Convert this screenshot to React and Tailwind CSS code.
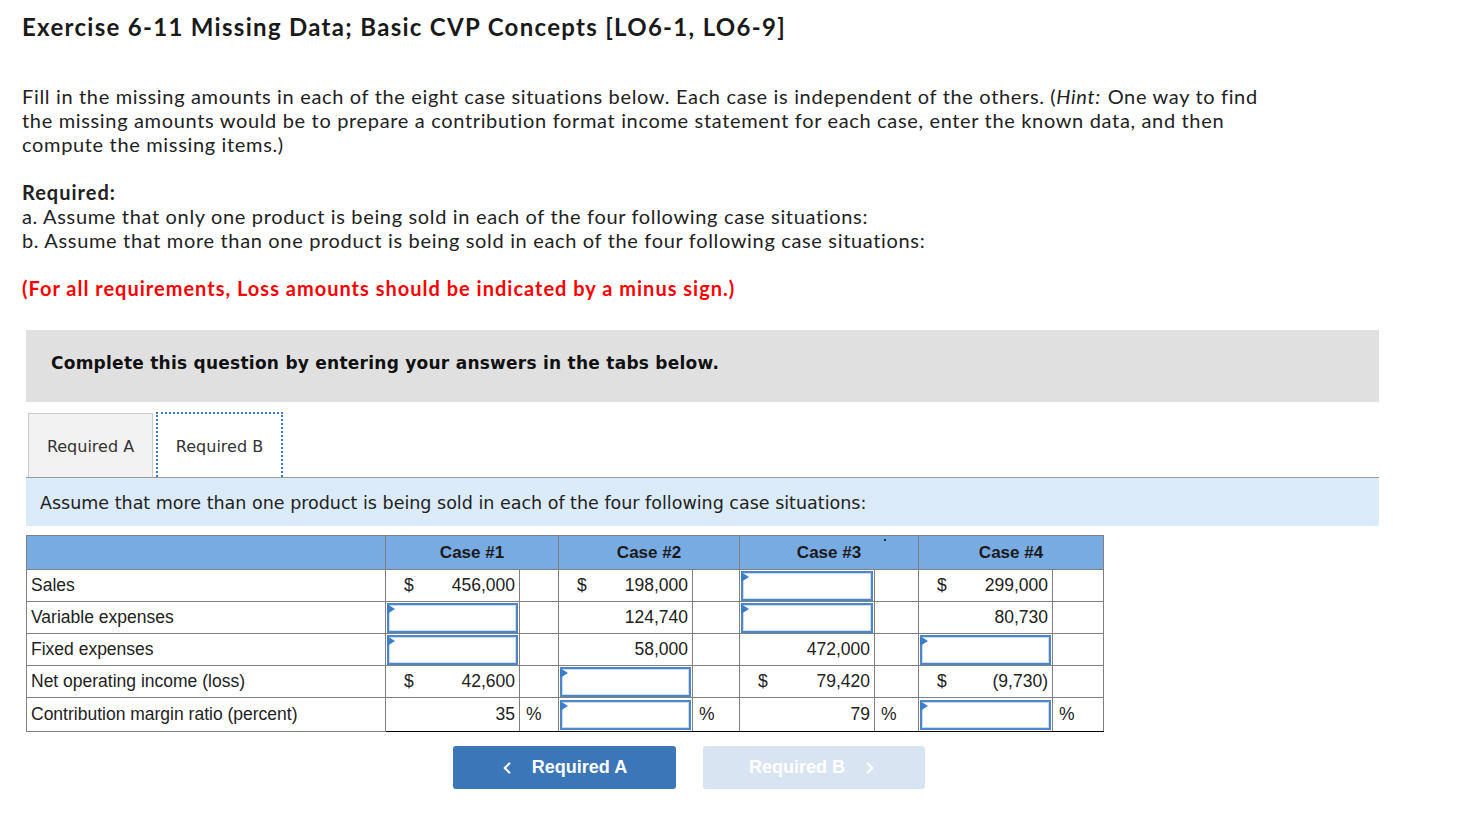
import React from 'react';
import { ChevronLeft, ChevronRight } from 'lucide-react';

const body = { fontFamily: 'Lato, "Open Sans", sans-serif' };

const InputBox = () => (
  <div className="relative h-[30px] mx-px border-2 border-[#4d87c7] bg-white shadow-[inset_0_0_0_1px_#c9dcf0]">
    <span className="absolute -left-[2px] -top-[1px] w-0 h-0 border-y-[5px] border-y-transparent border-l-[8px] border-l-[#3d7cc9]" />
  </div>
);

const Money = ({ dollar, value }) => (
  <div className="flex items-center justify-between pl-[18px] pr-[4px]">
    <span>{dollar ? '$' : ''}</span>
    <span>{value}</span>
  </div>
);

const rows = [
  {
    label: 'Sales',
    cells: [
      { dollar: true, value: '456,000' },
      { dollar: true, value: '198,000' },
      { input: true },
      { dollar: true, value: '299,000' },
    ],
  },
  {
    label: 'Variable expenses',
    cells: [{ input: true }, { value: '124,740' }, { input: true }, { value: '80,730' }],
  },
  {
    label: 'Fixed expenses',
    cells: [{ input: true }, { value: '58,000' }, { value: '472,000' }, { input: true }],
  },
  {
    label: 'Net operating income (loss)',
    cells: [
      { dollar: true, value: '42,600' },
      { input: true },
      { dollar: true, value: '79,420' },
      { dollar: true, value: '(9,730)' },
    ],
    topLine: true,
  },
  {
    label: 'Contribution margin ratio (percent)',
    cells: [
      { value: '35', pct: true },
      { input: true, pct: true },
      { value: '79', pct: true },
      { input: true, pct: true },
    ],
    topLine: true,
    last: true,
  },
];

const widths = ['w-[359px]', 'w-[134px]', 'w-[39px]', 'w-[134px]', 'w-[47px]', 'w-[135px]', 'w-[44px]', 'w-[134px]', 'w-[51px]'];

export default function App() {
  return (
    <div className="min-h-screen bg-white text-[#222] pl-[22px] pt-[11px]" style={body}>
      <h1 className="text-[24px] leading-[32px] font-bold tracking-[1.3px] text-[#1a1a1a]">
        Exercise 6-11 Missing Data; Basic CVP Concepts [LO6-1, LO6-9]
      </h1>

      <div className="text-[20px] leading-[24px] tracking-[0.66px] mt-[41px] w-[1250px]">
        <p>
          Fill in the missing amounts in each of the eight case situations below. Each case is independent of the
          others. (<i className="pr-[1px]">Hint:</i> One way to find the missing amounts would be to prepare a
          contribution format income statement for each case, enter the known data, and then compute the missing
          items.)
        </p>
        <p className="mt-[24px] font-bold tracking-[1px]">Required:</p>
        <p>a. Assume that only one product is being sold in each of the four following case situations:</p>
        <p>b. Assume that more than one product is being sold in each of the four following case situations:</p>
        <p className="mt-[24px] font-bold tracking-[1px] text-[#ff0000]">
          (For all requirements, Loss amounts should be indicated by a minus sign.)
        </p>
      </div>

      <div className="ml-[4px] w-[1353px] mt-[30px]" style={{ fontFamily: '"DejaVu Sans", Verdana, sans-serif' }}>
        <div className="h-[72px] bg-[#e0e0e0] flex items-center pl-[25px] pb-[4px] text-[17px] tracking-[0.25px] font-bold text-[#111]">
          Complete this question by entering your answers in the tabs below.
        </div>

        <div className="flex items-end gap-[3px] mt-[10px] pl-[2px] border-b border-[#999]">
          <div className="w-[125px] h-[64px] bg-[#f2f2f2] border border-b-0 border-[#ccc] flex items-center justify-center pt-[2px] text-[16px] text-[#333]">
            Required A
          </div>
          <div className="w-[127px] h-[65px] bg-white border-2 border-dotted border-[#3b78c2] border-b-0 flex items-center justify-center pt-[2px] text-[16px] text-[#333]">
            Required B
          </div>
        </div>

        <div className="h-[48px] bg-[#dbebf9] flex items-center pl-[14px] pt-[3px] text-[17.5px] text-[#222]">
          Assume that more than one product is being sold in each of the four following case situations:
        </div>

        <div className="relative mt-[9px]" style={{ fontFamily: '"Liberation Sans", Arial, sans-serif' }}>
          <span className="absolute left-[858px] top-[4px] w-[2px] h-[2px] bg-black rounded-full" />
          <table className="table-fixed border-collapse text-[17.5px] text-[#222]">
            <colgroup>
              {widths.map((w, i) => (
                <col key={i} className={w} />
              ))}
            </colgroup>
            <thead>
              <tr className="h-[34px] bg-[#78abe2]">
                <th className="border border-[#808080]" />
                {['Case #1', 'Case #2', 'Case #3', 'Case #4'].map((c) => (
                  <th key={c} colSpan={2} className="border border-[#808080] text-[17px] font-bold text-[#1a1a1a]">
                    {c}
                  </th>
                ))}
              </tr>
            </thead>
            <tbody>
              {rows.map((r) => (
                <tr key={r.label} className={r.last ? 'h-[34px]' : 'h-[32px]'}>
                  <td className="border border-[#808080] pl-[4px] whitespace-nowrap">{r.label}</td>
                  {r.cells.map((c, i) => (
                    <React.Fragment key={i}>
                      <td
                        className={`border border-[#808080] p-0 ${r.topLine ? 'border-t-black' : ''} ${
                          r.last ? 'border-b-black' : ''
                        }`}
                      >
                        {c.input ? <InputBox /> : <Money dollar={c.dollar} value={c.value} />}
                      </td>
                      <td
                        className={`border border-[#808080] pl-[6px] ${r.topLine ? 'border-t-black' : ''} ${
                          r.last ? 'border-b-black' : ''
                        }`}
                      >
                        {c.pct ? '%' : ''}
                      </td>
                    </React.Fragment>
                  ))}
                </tr>
              ))}
            </tbody>
          </table>
        </div>

        <div className="flex gap-[27px] mt-[14px] ml-[427px]" style={{ fontFamily: '"Liberation Sans", Arial, sans-serif' }}>
          <button className="w-[223px] h-[43px] rounded-[3px] bg-[#3b76b9] text-white font-bold text-[18px] flex items-center justify-center gap-[16px] pr-[4px]">
            <ChevronLeft size={18} strokeWidth={3} />
            Required A
          </button>
          <button className="w-[222px] h-[43px] rounded-[3px] bg-[#d9e4f2] text-white font-bold text-[18px] flex items-center justify-center gap-[16px]">
            Required B
            <ChevronRight size={18} strokeWidth={3} />
          </button>
        </div>
      </div>
    </div>
  );
}
